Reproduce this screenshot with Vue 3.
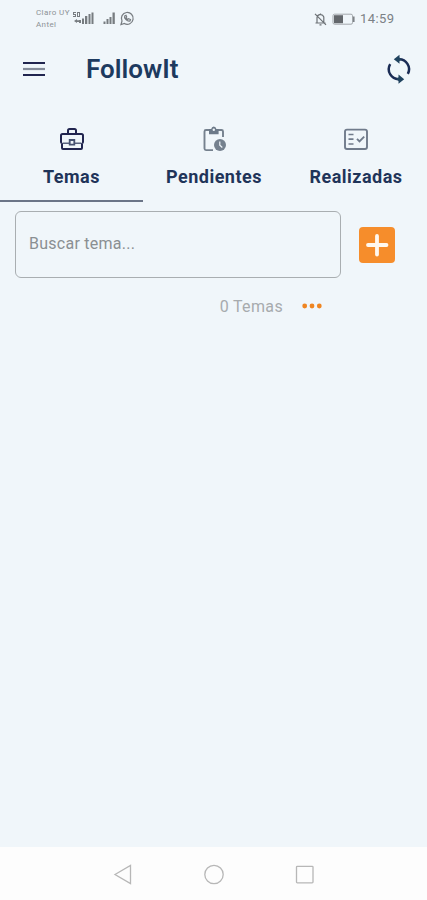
<script setup>
import { ref } from 'vue'

const active = ref('Temas')
const tabs = ['Temas', 'Pendientes', 'Realizadas']
const search = ref('')
</script>

<template>
  <div class="screen">
    <div class="status">
      <div class="carriers"><span>Claro UY</span><span>Antel</span></div>
      <svg class="signals" width="64" height="18" viewBox="0 0 64 18" fill="#777c80">
        <path d="M1 2h3v1H2v1h2v3H1V6h2V5H1zM5 2h3v5H5zM6 3v3h1V3z" fill-rule="evenodd" />
        <path d="M2 11l3-2v1.300h2V12H5v1zM7 10h2v3H7zM10 8.500h2V14h-2zM13 6h2.300v8H13zM16.500 4h2v10h-2zM19.500 2.500h2V14h-2z" />
        <path d="M31.500 11.500h2V14h-2zM34.500 9h2v5h-2zM37.500 7h2v7h-2zM40.500 2.500h2.300V14h-2.300z" />
        <g fill="none" stroke="#777c80" stroke-width="1.200">
          <path d="M49 14.500l1-3.500A5.900 5.900 0 1 1 52.400 13.500z" />
          <path d="M52.700 6c-1 2 2.700 6 5.300 5l.5-1.500-2-.8-1 .8-1.500-1.600.7-1-.7-1.600z" />
        </g>
      </svg>
      <div class="status-right">
        <svg width="15" height="15" viewBox="0 0 15 15" fill="none" stroke="#6c7175" stroke-width="1.200">
          <path d="M4 10.500V6.500A3.500 3.500 0 0 1 10.800 5v5.700M2.500 11h10M6.500 12.800h2M7.500 2.800V1.500M2 1.800l11 11" />
        </svg>
        <svg width="24" height="13" viewBox="0 0 24 13">
          <rect x="1" y="1.200" width="19.500" height="10" rx="1.500" fill="none" stroke="#a2a7ab" />
          <path d="M2 2.200h9v8H2z" fill="#63676b" />
          <path d="M21.800 3.500v5.500" stroke="#777c80" stroke-width="1.500" />
        </svg>
        <span class="time">14:59</span>
      </div>
    </div>

    <header class="appbar">
      <svg class="menu" width="22" height="16" viewBox="0 0 22 16">
        <path d="M0 2h22M0 14h22" stroke="#21254f" stroke-width="2" />
        <path d="M0 8h22" stroke="#858c9a" stroke-width="2.200" />
      </svg>
      <h1>FollowIt</h1>
      <svg class="sync" width="32" height="32" viewBox="0 0 32 32">
        <g fill="none" stroke="#1b2c55" stroke-width="2.500">
          <path d="M15.500 6.300A9.900 9.900 0 0 1 24.800 20.900" />
          <path d="M16.500 26.100A9.900 9.900 0 0 1 7.200 11.100" />
        </g>
        <path d="M10.800 6.200l5.700-4.500v2.800l2.200 1.800-2.200 1.800v2.700zM21.200 26.200l-5.700 4.500v-2.800l-2.200-1.800 2.200-1.800v-2.700z" fill="#20435f" />
      </svg>
    </header>

    <nav class="tabs">
      <button v-for="(tab, i) in tabs" :key="tab" class="tab" :class="{ active: active === tab }" @click="active = tab">
        <svg v-if="i === 0" width="28" height="28" viewBox="0 0 28 28" fill="none" stroke="#21254f" stroke-width="2">
          <path d="M10 9V5.500Q10 4 11.500 4h5Q18 4 18 5.500V9M4 18Q3 18 3 17V10.500Q3 9 4.500 9h19Q25 9 25 10.500V17q0 1-1 1M4 18v5q0 1 1 1h18q1 0 1-1v-5" />
          <path d="M4.500 18.300h7M16.500 18.300h7" stroke="#59637f" stroke-width="1.500" />
          <path d="M11.700 15h4.600v4.700h-4.600z" stroke="#465271" stroke-width="1.800" />
        </svg>
        <svg v-else-if="i === 1" width="28" height="28" viewBox="0 0 28 28">
          <path d="M13 25.100H6Q4.500 25.100 4.500 23.600V6.500Q4.500 5 6 5h15.500Q23 5 23 6.500V12" fill="none" stroke="#75818e" stroke-width="1.900" />
          <path d="M9 4h2.200Q11.700 1.500 13.800 1.500T16.400 4h2.200v5.200H9z" fill="#6c7988" />
          <circle cx="13.800" cy="4.700" r="1.200" fill="#f0f6fa" />
          <circle cx="20" cy="20" r="6" fill="#75818e" />
          <path d="M19.800 16.500v3.800l2.500 2.200" fill="none" stroke="#f0f6fa" stroke-width="1.200" />
        </svg>
        <svg v-else width="28" height="28" viewBox="0 0 28 28" fill="none" stroke="#707b8b" stroke-width="1.900">
          <rect x="3" y="4.600" width="22" height="19.400" rx="2" />
          <path d="M6.500 9.500h5M6.500 14.200h5M6.500 19h5" stroke-width="1.700" />
          <path d="M15 13.800l2.500 2.500 4.700-4.700" />
        </svg>
        <span>{{ tab }}</span>
      </button>
    </nav>

    <main>
      <div class="search-row">
        <input v-model="search" class="search" type="text" placeholder="Buscar tema..." />
        <button class="add" aria-label="Agregar tema">
          <svg width="36" height="36" viewBox="0 0 36 36"><path d="M18 9v18.500M9 18h18.500" stroke="#fff8ef" stroke-width="3.800" stroke-linecap="round" /></svg>
        </button>
      </div>
      <div class="summary">
        <span>0 Temas</span>
        <svg width="20" height="6" viewBox="0 0 20 6" fill="#ef8521">
          <circle cx="2.700" cy="3" r="2.400" /><circle cx="10" cy="3" r="2.400" /><circle cx="17.300" cy="3" r="2.400" />
        </svg>
      </div>
    </main>

    <footer class="navbar">
      <svg width="20" height="22" viewBox="0 0 20 22"><path d="M2 11.500L17.500 2.500v18z" /></svg>
      <svg width="20" height="22" viewBox="0 0 20 22"><circle cx="10" cy="11.500" r="9.200" /></svg>
      <svg width="20" height="22" viewBox="0 0 20 22"><rect x="1.500" y="3.300" width="16.500" height="16.500" rx=".8" /></svg>
    </footer>
  </div>
</template>

<style>
body {
  background: #f0f6fa;
}
</style>

<style scoped>
.screen {
  box-sizing: border-box;
  width: 427px;
  height: 900px;
  display: flex;
  flex-direction: column;
  overflow: hidden;
  background: #f0f6fa;
  font-family: Roboto, "Liberation Sans", sans-serif;
}
svg {
  display: block;
  flex: none;
}
button {
  border: 0;
  padding: 0;
  background: none;
  font: inherit;
}
.status {
  height: 38px;
  flex: none;
  display: flex;
  align-items: center;
  padding-left: 36px;
  padding-right: 32px;
}
.carriers {
  width: 36px;
  display: flex;
  flex-direction: column;
  font-size: 8px;
  line-height: 12px;
  letter-spacing: 0.4px;
  white-space: nowrap;
  color: #8d9296;
}
.status-right {
  margin-left: auto;
  display: flex;
  align-items: center;
  gap: 4px;
}
.time {
  width: 35px;
  font-size: 13px;
  line-height: 16px;
  letter-spacing: 0.4px;
  color: #7b8185;
}
.appbar {
  height: 62px;
  flex: none;
  display: flex;
  align-items: center;
  padding: 0 12px 0 23px;
}
h1 {
  margin: 0 0 0 41px;
  font-size: 26px;
  font-weight: 600;
  line-height: 32px;
  letter-spacing: 0;
  color: #1d3a5f;
}
.sync {
  margin-left: auto;
}
.tabs {
  height: 102px;
  flex: none;
  display: grid;
  grid-template-columns: 143px 142px 142px;
}
.tab {
  box-sizing: border-box;
  display: flex;
  flex-direction: column;
  align-items: center;
  padding-top: 25px;
  border-bottom: 2px solid transparent;
  gap: 12px;
  font-size: 18px;
  font-weight: 700;
  line-height: 24px;
  letter-spacing: 0.5px;
  color: #1f3459;
}
.tab.active {
  border-bottom-color: #6b7587;
}
main {
  flex: 1;
  padding: 9px 32px 0 15px;
}
.search-row {
  display: flex;
  align-items: center;
  justify-content: space-between;
}
.search {
  box-sizing: border-box;
  width: 326px;
  height: 67px;
  padding: 0 13px 2px;
  border: 1.5px solid #a9aeb1;
  border-radius: 6px;
  outline: 0;
  background: transparent;
  font-family: inherit;
  font-size: 16px;
  letter-spacing: 0.25px;
  color: #666b70;
}
.search::placeholder {
  color: #8a8f92;
  opacity: 1;
}
.add {
  width: 36px;
  height: 36px;
  border-radius: 4px;
  background: #f68d2b;
}
.summary {
  display: flex;
  align-items: center;
  justify-content: flex-end;
  gap: 19px;
  height: 56px;
  padding-right: 73px;
  font-size: 16px;
  letter-spacing: 0.35px;
  color: #a7abae;
}
.navbar {
  height: 53px;
  flex: none;
  box-sizing: border-box;
  display: flex;
  justify-content: center;
  align-items: center;
  gap: 71px;
  background: #fdfdfd;
}
.navbar svg {
  fill: none;
  stroke: #b7b7b7;
  stroke-width: 1.3;
}
</style>
